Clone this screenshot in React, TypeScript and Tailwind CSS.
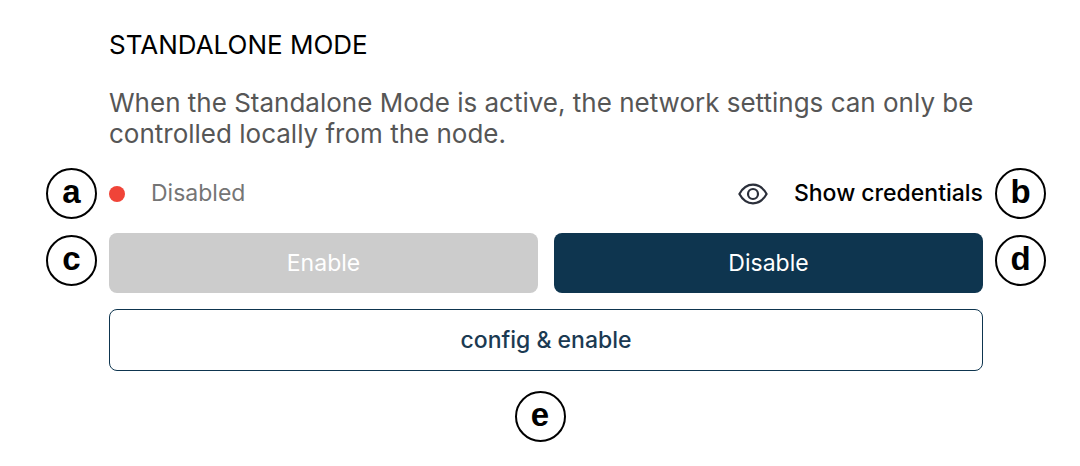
import React from 'react';

const Marker = ({ label }: { label: string }) => (
  <span className="flex size-[51px] shrink-0 items-center justify-center rounded-full border-2 border-black bg-white pb-1 font-['Liberation_Sans',sans-serif] text-[33px] font-bold leading-8 text-black">
    {label}
  </span>
);

const EyeIcon = () => (
  <svg width="30" height="22" viewBox="0 0 30 22" fill="none" stroke="#2b2f3a" strokeWidth="2.2" strokeLinejoin="round">
    <path d="M1.4 11C4.8 4.8 9.4 1.7 15 1.7S25.2 4.8 28.6 11C25.2 17.2 20.6 20.3 15 20.3S4.8 17.2 1.4 11Z" />
    <circle cx="15" cy="11" r="5" />
  </svg>
);

const App = () => {
  return (
    <main className="min-h-screen bg-white pt-[29px] font-['Inter',sans-serif]">
      <section className="pl-[46px] pr-[34px]">
        <header className="px-[63px]">
          <h2 className="text-[26px] leading-8 text-black">STANDALONE MODE</h2>
          <p className="mt-[26px] text-[26px] leading-[31px] text-[#565656]">
            When the Standalone Mode is active, the network settings can only be controlled locally from the node.
          </p>
        </header>

        <div className="mt-[19px] flex items-center gap-3">
          <Marker label="a" />
          <div className="flex flex-1 items-center justify-between text-[23px]">
            <div className="flex items-center gap-[26px] text-[#757575]">
              <span className="size-4 rounded-full bg-[#f04438]" />
              Disabled
            </div>
            <button className="flex items-center gap-[26px] font-medium text-black">
              <EyeIcon />
              Show credentials
            </button>
          </div>
          <Marker label="b" />
        </div>

        <div className="mt-[14px] flex items-start gap-3">
          <div className="pt-[2px]">
            <Marker label="c" />
          </div>
          <div className="grid flex-1 grid-cols-2 gap-4 text-[23px] text-white">
            <button disabled className="h-[60px] rounded-lg bg-[#cccccc]">
              Enable
            </button>
            <button className="h-[60px] rounded-lg bg-[#0e354f]">Disable</button>
          </div>
          <div className="pt-[2px]">
            <Marker label="d" />
          </div>
        </div>

        <div className="mt-4 px-[63px]">
          <button className="h-[62px] w-full rounded-lg border border-[#0e354f] text-[23px] font-medium text-[#1b3a52]">
            config &amp; enable
          </button>
        </div>
      </section>

      <div className="mt-5 flex justify-center">
        <Marker label="e" />
      </div>
    </main>
  );
};

export default App;
